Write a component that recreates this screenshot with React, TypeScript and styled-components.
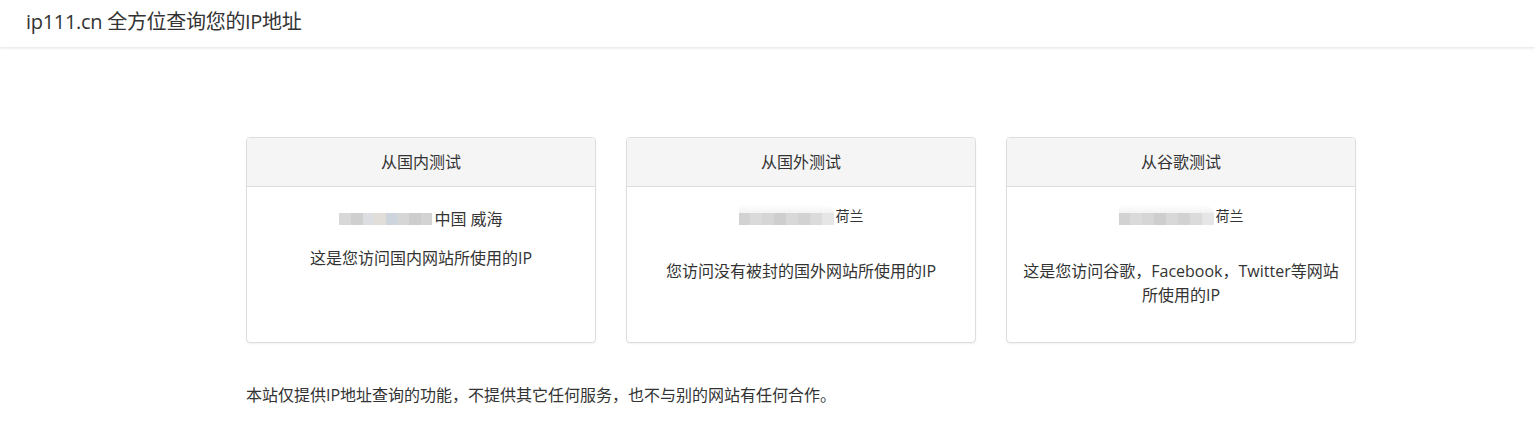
import React from "react";
import styled, { createGlobalStyle } from "styled-components";

const Global = createGlobalStyle`
  html, body { margin: 0; padding: 0; background: #fff; }
  body {
    font-family: "Open Sans", "Noto Sans CJK SC", sans-serif;
    color: #333;
    font-size: 16px;
    line-height: 24px;
  }
`;

const NavBar = styled.header`
  height: 47px;
  display: flex;
  align-items: center;
  padding-left: 26px;
  background: #fff;
  box-shadow: 0 1px 3px rgba(0, 0, 0, 0.12);
`;

const Brand = styled.div`
  font-size: 20px;
  line-height: 28px;
  letter-spacing: -0.3px;
  color: #333;
  margin-top: -4px;
`;

const Main = styled.main`
  padding: 90px 0 0 246px;
`;

const CardRow = styled.div`
  display: grid;
  grid-template-columns: repeat(3, 350px);
  gap: 30px;
`;

const Card = styled.section`
  border: 1px solid #ddd;
  border-radius: 4px;
  background: #fff;
  box-shadow: 0 1px 2px rgba(0, 0, 0, 0.06);
  display: flex;
  flex-direction: column;
  height: 206px;
  box-sizing: border-box;
  overflow: hidden;
`;

const CardHead = styled.div`
  background: #f5f5f5;
  border-bottom: 1px solid #ddd;
  height: 48px;
  display: flex;
  align-items: center;
  justify-content: center;
  font-size: 16px;
`;

const CardBody = styled.div<{ $top: number }>`
  flex: 1;
  padding: ${(p) => p.$top}px 15px 0;
  text-align: center;
`;

const IpRow = styled.div<{ $small?: boolean }>`
  display: flex;
  justify-content: center;
  align-items: ${(p) => (p.$small ? "flex-end" : "center")};
  height: ${(p) => (p.$small ? 20 : 24)}px;
  font-size: ${(p) => (p.$small ? 14 : 16)}px;
  line-height: ${(p) => (p.$small ? 18 : 24)}px;
`;

const Mosaic = styled.span<{ $w: number; $h: number; $fade?: boolean }>`
  display: inline-flex;
  align-items: flex-end;
  width: ${(p) => p.$w}px;
  height: ${(p) => p.$h}px;
  margin-right: 2px;
  ${(p) =>
    p.$fade
      ? `background: linear-gradient(180deg, rgba(255,255,255,0) 0%, #f3f3f3 40%, #eeeeee 100%); border-radius: 0 9px 9px 0;`
      : ""}
`;

const Tile = styled.span<{ $c: string; $h: number }>`
  flex: 1;
  height: ${(p) => p.$h}px;
  background: ${(p) => p.$c};
`;

const Desc = styled.p<{ $gap: number }>`
  margin: ${(p) => p.$gap}px 0 0;
  font-size: 16px;
  line-height: 24px;
`;

const Footer = styled.p`
  margin: 40px 0 0;
  font-size: 16px;
  line-height: 24px;
`;

const localTiles = ["#d8d8d8", "#cfcfcf", "#dcdee2", "#e1ddd9", "#cdd4db", "#d6d6d6", "#cdcdcd", "#d3d3d3"];
const remoteTiles = ["#d2d2d2", "#dadada", "#d6d6d6", "#cecece", "#d8d8d8", "#d2d2d2", "#dbdbdb", "#e6e6e6"];

function Blur({ w, h, tiles, tileH, fade }: { w: number; h: number; tiles: string[]; tileH: number; fade?: boolean }) {
  return (
    <Mosaic $w={w} $h={h} $fade={fade}>
      {tiles.map((c, i) => (
        <Tile key={i} $c={c} $h={tileH} />
      ))}
    </Mosaic>
  );
}

export default function App() {
  return (
    <>
      <Global />
      <NavBar>
        <Brand>ip111.cn 全方位查询您的IP地址</Brand>
      </NavBar>
      <Main>
        <CardRow>
          <Card>
            <CardHead>从国内测试</CardHead>
            <CardBody $top={20}>
              <IpRow>
                <Blur w={93} h={12} tiles={localTiles} tileH={12} />
                中国 威海
              </IpRow>
              <Desc $gap={15}>这是您访问国内网站所使用的IP</Desc>
            </CardBody>
          </Card>
          <Card>
            <CardHead>从国外测试</CardHead>
            <CardBody $top={18}>
              <IpRow $small>
                <Blur w={95} h={20} tiles={remoteTiles} tileH={12} fade />
                荷兰
              </IpRow>
              <Desc $gap={34}>您访问没有被封的国外网站所使用的IP</Desc>
            </CardBody>
          </Card>
          <Card>
            <CardHead>从谷歌测试</CardHead>
            <CardBody $top={18}>
              <IpRow $small>
                <Blur w={95} h={20} tiles={remoteTiles} tileH={12} fade />
                荷兰
              </IpRow>
              <Desc $gap={34}>
                这是您访问谷歌，Facebook，Twitter等网站
                <br />
                所使用的IP
              </Desc>
            </CardBody>
          </Card>
        </CardRow>
        <Footer>本站仅提供IP地址查询的功能，不提供其它任何服务，也不与别的网站有任何合作。</Footer>
      </Main>
    </>
  );
}
